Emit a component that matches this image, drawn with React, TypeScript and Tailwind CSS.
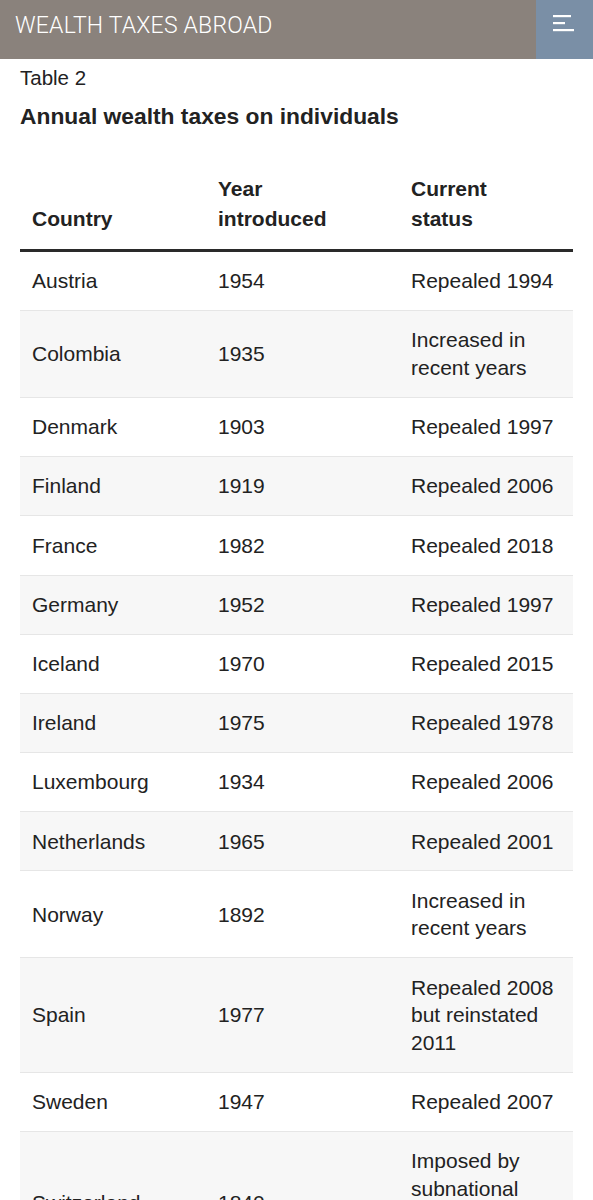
import React from "react";

const rows: [string, string, string][] = [
  ["Austria", "1954", "Repealed 1994"],
  ["Colombia", "1935", "Increased in recent years"],
  ["Denmark", "1903", "Repealed 1997"],
  ["Finland", "1919", "Repealed 2006"],
  ["France", "1982", "Repealed 2018"],
  ["Germany", "1952", "Repealed 1997"],
  ["Iceland", "1970", "Repealed 2015"],
  ["Ireland", "1975", "Repealed 1978"],
  ["Luxembourg", "1934", "Repealed 2006"],
  ["Netherlands", "1965", "Repealed 2001"],
  ["Norway", "1892", "Increased in recent years"],
  ["Spain", "1977", "Repealed 2008 but reinstated 2011"],
  ["Sweden", "1947", "Repealed 2007"],
  ["Switzerland", "1840", "Imposed by subnational governments (cantons)"],
];

export default function App() {
  return (
    <div className="w-[593px] bg-white text-[#222]" style={{ fontFamily: '"Liberation Sans", Arial, sans-serif' }}>
      <header className="flex h-[59px] bg-[#8a827c]">
        <div className="flex-1 pl-[15px] pt-[9px] text-[23px] font-light tracking-[0.2px] text-white" style={{ fontFamily: 'Roboto, "Liberation Sans", sans-serif' }}>
          WEALTH TAXES ABROAD
        </div>
        <div className="flex w-[57px] items-start justify-start bg-[#7a8fa6] pl-[17px] pt-[15px]">
          <svg width="22" height="18" viewBox="0 0 22 18">
            <rect x="0" y="0" width="18" height="2.2" fill="#fff" />
            <rect x="0" y="7" width="12" height="2.2" fill="#fff" />
            <rect x="0" y="14" width="21" height="2.2" fill="#fff" />
          </svg>
        </div>
      </header>
      <div className="px-5">
        <div className="pt-[6px] text-[20.5px] leading-[26px]">Table 2</div>
        <h1 className="mt-[11px] text-[22.8px] font-bold leading-[28px]">Annual wealth taxes on individuals</h1>
        <div className="mt-[44px]">
          <div className="grid grid-cols-[186px_193px_1fr] items-end border-b-[3px] border-[#2a2a2a] pb-[15px] text-[21px] font-bold leading-[30px]">
            <div className="pl-3">Country</div>
            <div className="pl-3">Year<br />introduced</div>
            <div className="pl-3">Current<br />status</div>
          </div>
          {rows.map((r, i) => (
            <div
              key={r[0]}
              className={`grid grid-cols-[186px_193px_1fr] items-center border-b border-[#e6e6e6] py-[15.3px] text-[21px] leading-[27.6px] ${i % 2 === 1 ? "bg-[#f7f7f7]" : "bg-white"}`}
            >
              <div className="pl-3">{r[0]}</div>
              <div className="pl-3">{r[1]}</div>
              <div className="pl-3 pr-2">{r[2]}</div>
            </div>
          ))}
        </div>
      </div>
    </div>
  );
}
